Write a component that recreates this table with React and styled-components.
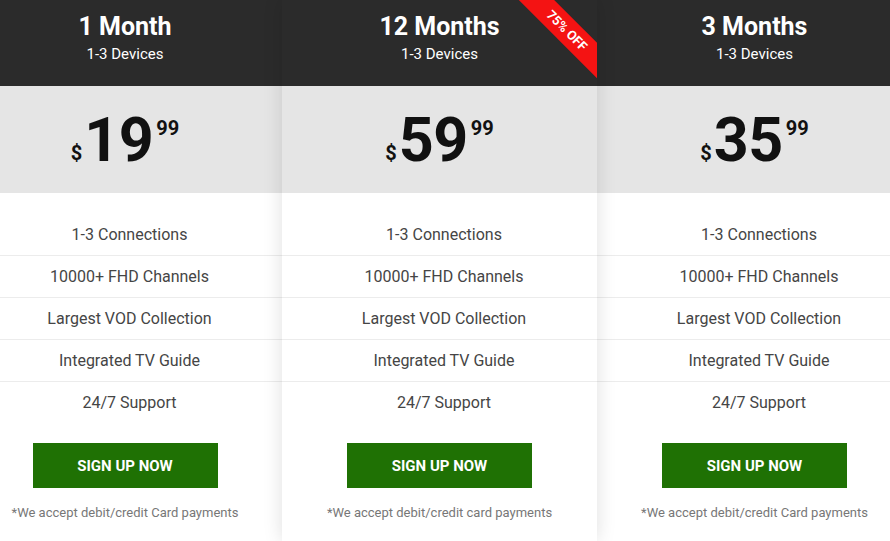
import React from 'react'
import styled, { createGlobalStyle } from 'styled-components'

const GlobalStyle = createGlobalStyle`
    html, body {
        margin: 0;
        padding: 0;
        background: #fff;
        overflow: hidden;
    }
    body {
        font-family: Roboto, 'Liberation Sans', Arial, sans-serif;
    }
`

const Plans = styled.div`
    display: grid;
    grid-template-columns: 314px 315px 315px;
    margin-left: -32px;
    min-height: 541px;
`

const Card = styled.div`
    position: relative;
    display: flex;
    flex-direction: column;
    background: #fff;
    overflow: hidden;
    z-index: ${props => (props.featured ? 1 : 0)};
    box-shadow: ${props =>
        props.featured ? '0 0 18px rgba(0, 0, 0, 0.13)' : 'none'};
`

const Header = styled.div`
    height: 86px;
    box-sizing: border-box;
    padding-top: 12px;
    background: #2b2b2b;
    color: #fff;
    text-align: center;
`

const Title = styled.div`
    font-size: 25px;
    font-weight: 700;
    line-height: 30px;
`

const Devices = styled.div`
    margin-top: 2px;
    font-size: 15px;
    line-height: 20px;
`

const Ribbon = styled.div`
    position: absolute;
    top: 0;
    right: 0;
    width: 80px;
    height: 80px;
    overflow: hidden;
`

const RibbonBand = styled.div`
    position: absolute;
    left: -15px;
    top: 18px;
    width: 130px;
    height: 25px;
    line-height: 25px;
    background: #f41313;
    color: #fff;
    font-size: 13px;
    font-weight: 700;
    text-align: center;
    transform: rotate(45deg);
`

const PriceBand = styled.div`
    height: 107px;
    box-sizing: border-box;
    padding-top: 2px;
    background: #e5e5e5;
    display: flex;
    justify-content: center;
    align-items: center;
`

const Price = styled.div`
    display: flex;
    align-items: flex-start;
    color: #111;
    font-weight: 700;
`

const Currency = styled.span`
    font-size: 20px;
    line-height: 20px;
    margin-top: 33px;
    margin-right: 2px;
`

const Amount = styled.span`
    font-size: 61px;
    line-height: 61px;
    letter-spacing: -0.5px;
`

const Cents = styled.span`
    font-size: 20px;
    line-height: 20px;
    margin-top: 8px;
    margin-left: 3px;
`

const Features = styled.ul`
    list-style: none;
    margin: 0;
    padding: 21px 0 0;
`

const Feature = styled.li`
    height: 42px;
    box-sizing: border-box;
    display: flex;
    align-items: center;
    justify-content: center;
    padding-left: 9px;
    font-size: 16px;
    color: #454545;
    border-bottom: 1px solid ${props => (props.last ? 'transparent' : '#ececec')};
`

const Footer = styled.div`
    display: flex;
    flex-direction: column;
    align-items: center;
    padding-top: 19px;
`

const SignUp = styled.button`
    width: 185px;
    height: 45px;
    border: none;
    border-radius: 0;
    background: #1f7104;
    color: #fff;
    font-family: inherit;
    font-size: 15px;
    font-weight: 700;
    text-transform: uppercase;
    cursor: pointer;
`

const Note = styled.div`
    margin-top: 17px;
    font-size: 13px;
    line-height: 16px;
    color: #777;
`

const features = [
    '1-3 Connections',
    '10000+ FHD Channels',
    'Largest VOD Collection',
    'Integrated TV Guide',
    '24/7 Support'
]

const plans = [
    { title: '1 Month', amount: '19', note: '*We accept debit/credit Card payments' },
    {
        title: '12 Months',
        amount: '59',
        featured: true,
        ribbon: '75% OFF',
        note: '*We accept debit/credit card payments'
    },
    { title: '3 Months', amount: '35', note: '*We accept debit/credit Card payments' }
]

const PlanCard = ({ plan }) => (
    <Card featured={plan.featured}>
        <Header>
            <Title>{plan.title}</Title>
            <Devices>1-3 Devices</Devices>
        </Header>
        {plan.ribbon && (
            <Ribbon>
                <RibbonBand>{plan.ribbon}</RibbonBand>
            </Ribbon>
        )}
        <PriceBand>
            <Price>
                <Currency>$</Currency>
                <Amount>{plan.amount}</Amount>
                <Cents>99</Cents>
            </Price>
        </PriceBand>
        <Features>
            {features.map((f, i) => (
                <Feature key={f} last={i === features.length - 1}>
                    {f}
                </Feature>
            ))}
        </Features>
        <Footer>
            <SignUp>Sign up now</SignUp>
            <Note>{plan.note}</Note>
        </Footer>
    </Card>
)

export default function App() {
    return (
        <>
            <GlobalStyle />
            <Plans>
                {plans.map(plan => (
                    <PlanCard key={plan.title} plan={plan} />
                ))}
            </Plans>
        </>
    )
}
